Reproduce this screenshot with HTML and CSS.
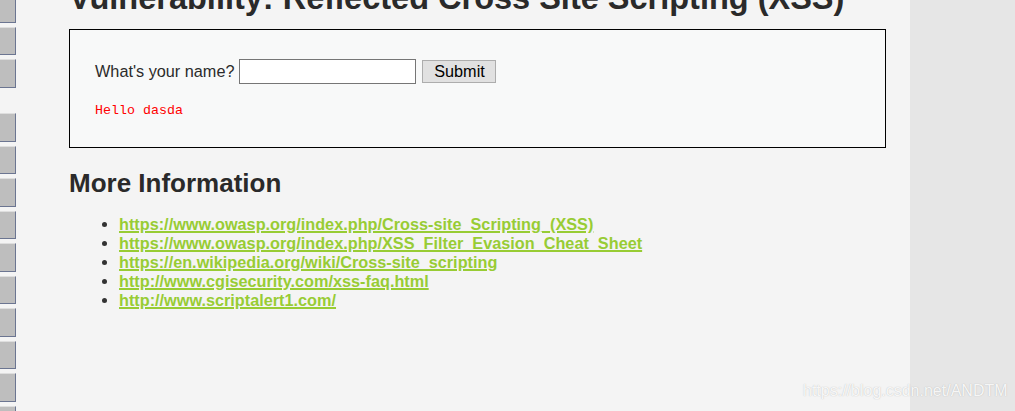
FILE: index.html
```html
<!DOCTYPE html>
<html lang="en">
<head>
<meta charset="utf-8">
<title>Vulnerability: Reflected Cross Site Scripting (XSS)</title>
<link rel="stylesheet" href="styles.css">
</head>
<body>
<div class="page">
  <nav class="menu">
    <div class="menu-block">
      <span class="menu-btn"></span>
      <span class="menu-btn"></span>
      <span class="menu-btn"></span>
    </div>
    <div class="menu-block">
      <span class="menu-btn"></span>
      <span class="menu-btn"></span>
      <span class="menu-btn"></span>
      <span class="menu-btn"></span>
      <span class="menu-btn"></span>
      <span class="menu-btn"></span>
      <span class="menu-btn"></span>
      <span class="menu-btn"></span>
      <span class="menu-btn"></span>
      <span class="menu-btn"></span>
    </div>
  </nav>
  <main class="main">
    <h1 class="title">Vulnerability: Reflected Cross Site Scripting (XSS)</h1>
    <div class="vuln-box">
      <form class="name-form">
        <label class="name-label" for="name">What's your name?</label>
        <input class="name-input" id="name" type="text">
        <button class="submit-btn" type="button">Submit</button>
      </form>
      <pre class="output">Hello dasda</pre>
    </div>
    <h2 class="subtitle">More Information</h2>
    <ul class="links">
      <li><a href="#">https://www.owasp.org/index.php/Cross-site_Scripting_(XSS)</a></li>
      <li><a href="#">https://www.owasp.org/index.php/XSS_Filter_Evasion_Cheat_Sheet</a></li>
      <li><a href="#">https://en.wikipedia.org/wiki/Cross-site_scripting</a></li>
      <li><a href="#">http://www.cgisecurity.com/xss-faq.html</a></li>
      <li><a href="#">http://www.scriptalert1.com/</a></li>
    </ul>
  </main>
</div>
<div class="watermark">https://blog.csdn.net/ANDTM</div>
</body>
</html>
```
FILE: styles.css
```css
html, body {
  margin: 0;
  padding: 0;
  height: 411px;
  overflow: hidden;
}
body {
  background: #e6e6e6;
  font-family: "Liberation Sans", Arial, sans-serif;
  font-size: 16.25px;
  color: #2b2b2b;
  position: relative;
}
.page {
  display: flex;
  align-items: flex-start;
  width: 910px;
  height: 411px;
  overflow: hidden;
  background: #f4f4f4;
}
.menu {
  width: 16px;
  flex: none;
  display: flex;
  flex-direction: column;
  gap: 25.5px;
  margin-top: -6px;
}
.menu-block {
  display: flex;
  flex-direction: column;
  gap: 4px;
}
.menu-btn {
  display: block;
  box-sizing: border-box;
  height: 28.5px;
  width: 16px;
  background: #bebebe;
  border-top: 1px solid #dedede;
  border-bottom: 1px solid #6b7591;
  border-right: 1px solid #6b7591;
}
.main {
  margin-left: 53px;
  width: 817px;
}
.title {
  font-size: 32.5px;
  font-weight: bold;
  line-height: 37px;
  margin: -20px 0 12px;
  color: #2a2a2a;
  white-space: nowrap;
}
.vuln-box {
  border: 1px solid #000;
  background: #f8f9f9;
  padding: 29px 25px 28px;
}
.name-form {
  display: flex;
  align-items: center;
  height: 25px;
  margin: 0;
}
.name-label {
  color: #2b2b2b;
  font-size: 16.25px;
}
.name-input {
  box-sizing: border-box;
  width: 177px;
  height: 25px;
  margin: 0 0 0 5px;
  border: 1px solid #767676;
  background: #fff;
  padding: 1px 2px;
  font: 16px "Liberation Sans", Arial, sans-serif;
}
.submit-btn {
  box-sizing: border-box;
  width: 74px;
  height: 23px;
  margin: 0 0 0 6px;
  padding: 0;
  background: #e1e1e1;
  border: 1px solid #adadad;
  border-radius: 0;
  color: #000;
  font: 16.25px "Liberation Sans", Arial, sans-serif;
}
.output {
  margin: 19px 0 0;
  font-family: "Liberation Mono", "Courier New", monospace;
  font-size: 13.33px;
  line-height: 16px;
  color: #ff0000;
}
.subtitle {
  font-size: 26px;
  font-weight: bold;
  line-height: 30px;
  margin: 20px 0 0;
  color: #2a2a2a;
}
.links {
  margin: 17px 0 0;
  padding-left: 50px;
  line-height: 19px;
  color: #333;
}
.links a {
  color: #98cc34;
  font-weight: bold;
  font-size: 16.25px;
  text-decoration: underline;
  text-decoration-thickness: 2px;
  text-underline-offset: 1px;
}
.watermark {
  position: absolute;
  left: 803px;
  top: 382px;
  font-size: 16px;
  line-height: 18px;
  color: rgba(255, 255, 255, 0.9);
  text-shadow: 0 0 1px rgba(120, 120, 120, 0.5);
  white-space: nowrap;
}
```
